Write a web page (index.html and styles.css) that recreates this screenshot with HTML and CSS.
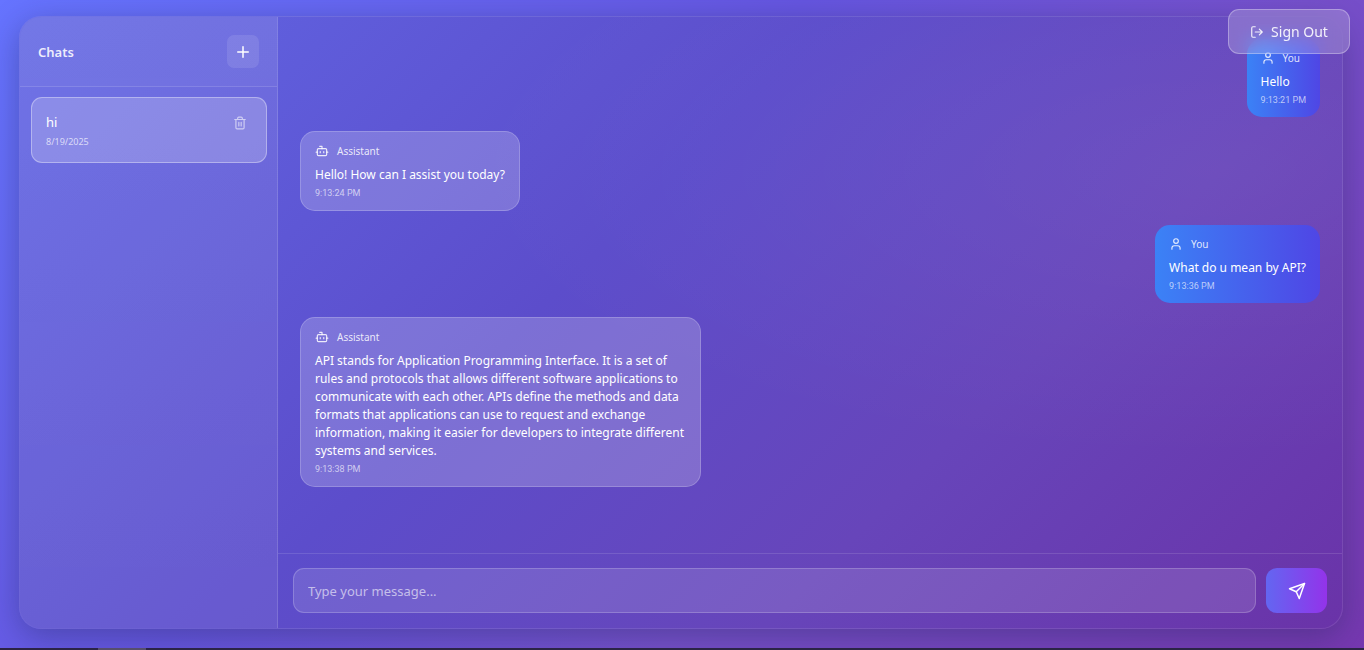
FILE: index.html
```html
<!DOCTYPE html>
<html lang="en">
<head>
<meta charset="utf-8">
<meta name="viewport" content="width=device-width, initial-scale=1">
<title>Chats</title>
<link rel="stylesheet" href="styles.css">
</head>
<body>
<svg class="sprite" aria-hidden="true">
  <symbol id="icon-user" viewBox="0 0 24 24"><path d="M19 21v-2a4 4 0 0 0-4-4H9a4 4 0 0 0-4 4v2"/><circle cx="12" cy="7" r="4"/></symbol>
  <symbol id="icon-bot" viewBox="0 0 24 24"><path d="M12 8V4H8"/><rect width="16" height="12" x="4" y="8" rx="2"/><path d="M2 14h2M20 14h2M15 13v2M9 13v2"/></symbol>
</svg>
<main class="page">
  <div class="app">
    <aside class="sidebar">
      <header class="sidebar-header">
        <h1 class="sidebar-title">Chats</h1>
        <button class="new-chat" type="button" aria-label="New chat">
          <svg class="icon icon-plus" viewBox="0 0 24 24"><path d="M5 12h14M12 5v14"/></svg>
        </button>
      </header>
      <ul class="chat-list">
        <li class="chat-item">
          <div class="chat-info">
            <span class="chat-name">hi</span>
            <time class="chat-date">8/19/2025</time>
          </div>
          <button class="delete-chat" type="button" aria-label="Delete chat">
            <svg class="icon icon-trash" viewBox="0 0 24 24"><path d="M3 6h18M19 6v14a2 2 0 0 1-2 2H7a2 2 0 0 1-2-2V6M8 6V4a2 2 0 0 1 2-2h4a2 2 0 0 1 2 2v2M10 11v6M14 11v6"/></svg>
          </button>
        </li>
      </ul>
    </aside>
    <section class="conversation">
      <div class="messages">
        <article class="message message-user">
          <div class="message-author"><svg class="icon icon-author"><use href="#icon-user"/></svg><span>You</span></div>
          <p class="message-text">Hello</p>
          <time class="message-time">9:13:21 PM</time>
        </article>
        <article class="message message-bot">
          <div class="message-author"><svg class="icon icon-author"><use href="#icon-bot"/></svg><span>Assistant</span></div>
          <p class="message-text">Hello! How can I assist you today?</p>
          <time class="message-time">9:13:24 PM</time>
        </article>
        <article class="message message-user">
          <div class="message-author"><svg class="icon icon-author"><use href="#icon-user"/></svg><span>You</span></div>
          <p class="message-text">What do u mean by API?</p>
          <time class="message-time">9:13:36 PM</time>
        </article>
        <article class="message message-bot">
          <div class="message-author"><svg class="icon icon-author"><use href="#icon-bot"/></svg><span>Assistant</span></div>
          <p class="message-text">API stands for Application Programming Interface. It is a set of rules and protocols that allows different software applications to communicate with each other. APIs define the methods and data formats that applications can use to request and exchange information, making it easier for developers to integrate different systems and services.</p>
          <time class="message-time">9:13:38 PM</time>
        </article>
      </div>
      <form class="composer">
        <input class="composer-input" type="text" placeholder="Type your message..." aria-label="Message">
        <button class="send" type="button" aria-label="Send message">
          <svg class="icon icon-send" viewBox="0 0 24 24"><path d="m22 2-7 20-4-9-9-4Z"/><path d="M22 2 11 13"/></svg>
        </button>
      </form>
    </section>
  </div>
  <button class="sign-out" type="button">
    <svg class="icon icon-exit" viewBox="0 0 24 24"><path d="M9 21H5a2 2 0 0 1-2-2V5a2 2 0 0 1 2-2h4M16 17l5-5-5-5M21 12H9"/></svg>
    <span>Sign Out</span>
  </button>
</main>
<div class="taskbar"><div class="taskbar-active"></div></div>
</body>
</html>
```
FILE: styles.css
```css
* { box-sizing: border-box; }
body {
  margin: 0;
  height: 100vh;
  display: flex;
  flex-direction: column;
  overflow: hidden;
  font-family: "Noto Sans", "Open Sans", sans-serif;
  color: #fff;
}
button, input { font: inherit; color: inherit; margin: 0; }
button { padding: 0; cursor: pointer; display: flex; align-items: center; justify-content: center; }
.sprite { display: none; }
.icon { fill: none; stroke: currentColor; stroke-width: 2; stroke-linecap: round; stroke-linejoin: round; flex: none; }
.page {
  flex: 1;
  min-height: 0;
  display: flex;
  padding: 16px 21px 19px 19px;
  background: linear-gradient(135deg, #6674ff 0%, #6656e0 40%, #7650cb 65%, #7638b0 100%);
  position: relative;
}
.app {
  flex: 1;
  display: flex;
  overflow: hidden;
  border: 1px solid rgba(255, 255, 255, .1);
  border-radius: 22px;
  background:
    radial-gradient(ellipse at 90% 25%, rgba(255, 255, 255, .05), transparent 45%) border-box,
    linear-gradient(135deg, #6166e4 0%, #5c4dcb 42%, #6745ba 70%, #6a33a8 100%) border-box;
  box-shadow: 0 8px 32px rgba(31, 38, 85, .37);
}
.sidebar {
  width: 258px;
  flex: none;
  border-right: 1px solid rgba(255, 255, 255, .14);
  background: linear-gradient(rgba(255, 255, 255, .09), rgba(255, 255, 255, .07));
}
.sidebar-header {
  display: flex;
  align-items: center;
  justify-content: space-between;
  padding: 18px;
  border-bottom: 1px solid rgba(255, 255, 255, .13);
  background: rgba(255, 255, 255, .03);
}
.sidebar-title { margin: 0; font-size: 13px; line-height: 20px; font-weight: 600; color: rgba(255, 255, 255, .88); }
.new-chat { width: 32px; height: 33px; border: 0; border-radius: 7px; background: rgba(255, 255, 255, .1); }
.icon-plus { width: 18px; height: 18px; }
.chat-list { list-style: none; margin: 0; padding: 10px 10px 10px 11px; }
.chat-item {
  display: flex;
  align-items: flex-start;
  justify-content: space-between;
  height: 66px;
  padding: 14px 15px 14px 14px;
  border: 1px solid rgba(255, 255, 255, .35);
  border-radius: 11px;
  background: rgba(255, 255, 255, .2);
}
.chat-info { display: flex; flex-direction: column; gap: 3px; }
.chat-name { font-size: 13px; line-height: 20px; }
.chat-date { font-size: 9px; line-height: 13px; color: rgba(255, 255, 255, .7); }
.delete-chat { width: 22px; height: 22px; border: 0; background: none; color: rgba(255, 255, 255, .6); }
.icon-trash { width: 14px; height: 14px; }
.conversation { flex: 1; min-width: 0; display: flex; flex-direction: column; }
.messages { flex: 1; min-height: 0; display: flex; flex-direction: column; gap: 14px; padding: 22px; overflow: hidden; }
.message { max-width: 401px; padding: 11px 14px 10px; border-radius: 15px; }
.message-user { align-self: flex-end; background: linear-gradient(90deg, #3b82f6, #4f46e5); }
.message-bot { align-self: flex-start; border: 1px solid rgba(255, 255, 255, .2); background: rgba(255, 255, 255, .2); }
.message-author { display: flex; align-items: center; gap: 8px; margin-bottom: 7px; font-size: 10px; line-height: 16px; color: rgba(255, 255, 255, .85); }
.icon-author { width: 14px; height: 14px; }
.message-text { margin: 0 0 3px; font-size: 12px; line-height: 18px; }
.message-time { display: block; font-family: Roboto, "Noto Sans", sans-serif; font-size: 9px; line-height: 13px; color: rgba(255, 255, 255, .65); }
.composer { display: flex; gap: 10px; padding: 14px 15px 15px; border-top: 1px solid rgba(255, 255, 255, .12); }
.composer-input {
  flex: 1;
  min-width: 0;
  height: 45px;
  padding: 0 14px;
  border: 1px solid rgba(255, 255, 255, .2);
  border-radius: 11px;
  background: rgba(255, 255, 255, .12);
  font-size: 13px;
  outline: none;
}
.composer-input::placeholder { color: rgba(255, 255, 255, .6); opacity: 1; }
.send { width: 61px; height: 45px; border: 0; border-radius: 11px; background: linear-gradient(90deg, #6366f1, #9333ea); }
.icon-send { width: 18px; height: 18px; }
.sign-out {
  position: absolute;
  top: 9px;
  right: 14px;
  gap: 7px;
  width: 122px;
  height: 45px;
  border: 1px solid rgba(255, 255, 255, .3);
  border-radius: 11px;
  background: rgba(255, 255, 255, .2);
  backdrop-filter: blur(9px);
  font-size: 14px;
  color: rgba(255, 255, 255, .9);
}
.icon-exit { width: 14px; height: 14px; }
.taskbar { height: 2px; padding-left: 98px; background: #2d2546; }
.taskbar-active { width: 48px; height: 2px; background: #5c5370; }
```
